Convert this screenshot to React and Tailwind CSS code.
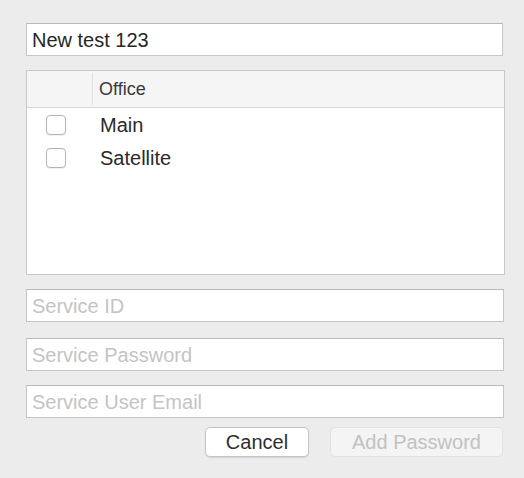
const offices = ['Main', 'Satellite'];

const Field = ({ placeholder, value, className = '' }) => (
  <div
    className={`h-[33px] bg-white border border-[#c6c6c6] border-t-[#b9b9b9] flex items-center px-[5px] text-[20px] ${className}`}
  >
    {value ? (
      <span className="text-[#262626]">{value}</span>
    ) : (
      <span className="text-[#c4c4c4] font-light">{placeholder}</span>
    )}
  </div>
);

export default function App() {
  return (
    <div
      className="w-[524px] h-[478px] bg-[#ececec] pl-[26px] pr-[20px] pt-[23px] flex flex-col"
      style={{ fontFamily: '"Liberation Sans", Arial, sans-serif' }}
    >
      <Field value="New test 123" className="mr-[1px]" />

      <div className="mt-[14px] -mr-[1px] h-[205px] bg-white border border-[#c8c8c8] flex flex-col">
        <div className="h-[37px] shrink-0 bg-[#f5f5f5] border-b border-[#d6d6d6] flex">
          <div className="w-[66px] border-r border-[#e0e0e0] my-[2px]" />
          <div className="flex items-center pl-[6px] text-[18px] text-[#3a3a3a]">Office</div>
        </div>
        {offices.map((name) => (
          <div key={name} className="h-[33px] flex items-center">
            <div className="w-[67px] pl-[19px] flex items-center">
              <div className="w-[20px] h-[20px] rounded-[4px] border border-[#b4b4b4] bg-white shadow-[0_1px_1px_rgba(0,0,0,0.06)]" />
            </div>
            <span className="pl-[6px] text-[20px] text-[#2a2a2a]">{name}</span>
          </div>
        ))}
      </div>

      <Field placeholder="Service ID" className="mt-[14px] h-[33px]" />
      <Field placeholder="Service Password" className="mt-[16px]" />
      <Field placeholder="Service User Email" className="mt-[14px]" />

      <div className="mt-[9px] flex justify-end gap-[21px] pr-[1px]">
        <button className="w-[104px] h-[30px] bg-white border border-[#c4c4c4] rounded-[5px] shadow-[0_1px_1px_rgba(0,0,0,0.1)] text-[20px] text-[#2e2e2e] flex items-center justify-center">
          Cancel
        </button>
        <button className="w-[173px] h-[30px] bg-[#f4f4f4] border border-[#e2e2e2] rounded-[5px] text-[20px] text-[#c2c2c2] flex items-center justify-center">
          Add Password
        </button>
      </div>
    </div>
  );
}
